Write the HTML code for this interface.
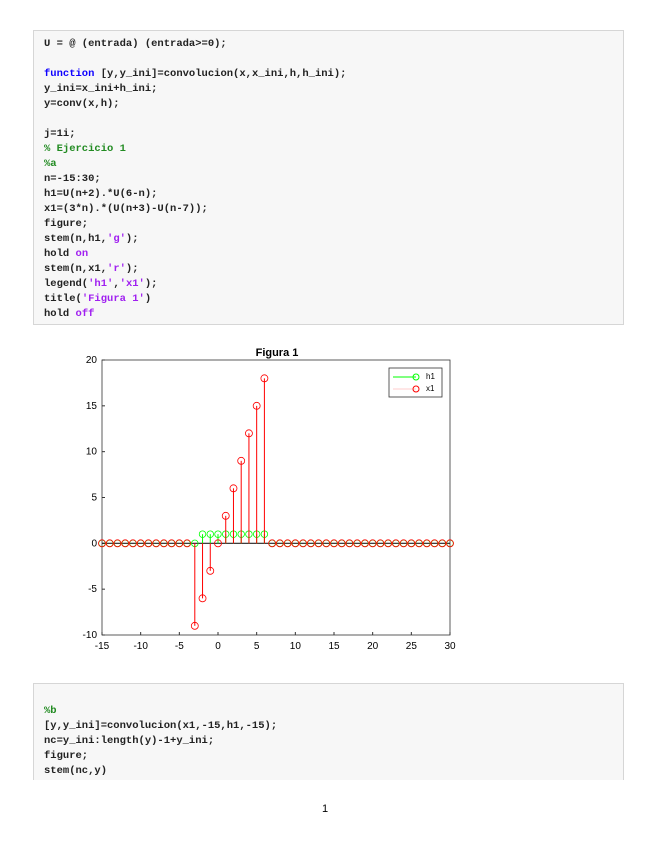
<!DOCTYPE html>
<html><head><meta charset="utf-8"><style>
body{margin:0;width:655px;height:848px;background:#fff;position:relative;font-family:"Liberation Sans",sans-serif}
.box{position:absolute;left:33px;width:591px;background:#f7f7f7;border:1px solid #d6d6d6;box-sizing:border-box}
pre{margin:0;position:absolute;left:10px;font-family:"Liberation Mono",monospace;font-size:10.5px;line-height:15px;font-weight:bold;color:#222}
.k{color:#0e00ff}.c{color:#228b22}.s{color:#a020f0}
#pn{position:absolute;left:322px;top:803px;font-size:11px}
</style></head><body>
<div class="box" style="top:30px;height:295px"><pre style="top:6px">U = @ (entrada) (entrada>=0);

<span class="k">function</span> [y,y_ini]=convolucion(x,x_ini,h,h_ini);
y_ini=x_ini+h_ini;
y=conv(x,h);

j=1i;
<span class="c">% Ejercicio 1</span>
<span class="c">%a</span>
n=-15:30;
h1=U(n+2).*U(6-n);
x1=(3*n).*(U(n+3)-U(n-7));
figure;
stem(n,h1,<span class="s">'g'</span>);
hold <span class="s">on</span>
stem(n,x1,<span class="s">'r'</span>);
legend(<span class="s">'h1'</span>,<span class="s">'x1'</span>);
title(<span class="s">'Figura 1'</span>)
hold <span class="s">off</span></pre></div>
<svg id="p" width="655" height="848" style="position:absolute;left:0;top:0" font-family="Liberation Sans" font-size="10"></svg>
<div class="box" style="top:683px;height:97px;border-bottom:none"><pre style="top:20px"><span class="c">%b</span>
[y,y_ini]=convolucion(x1,-15,h1,-15);
nc=y_ini:length(y)-1+y_ini;
figure;
stem(nc,y)</pre></div>
<div id="pn">1</div>
<script>
var s='',L=102,R=450,T=360,B=635;
function X(n){return L+(n+15)*(R-L)/45}
function Y(v){return T+(20-v)*(B-T)/30}
s+='<rect x="'+L+'" y="'+T+'" width="'+(R-L)+'" height="'+(B-T)+'" fill="#fff" stroke="#333" stroke-width="0.8"/>';
for(var v=-10;v<=20;v+=5){s+='<text x="'+(L-5)+'" y="'+(Y(v)+3)+'" text-anchor="end">'+v+'</text>';s+='<line x1="'+L+'" x2="'+(L+3)+'" y1="'+Y(v)+'" y2="'+Y(v)+'" stroke="#333"/>';}
for(var n=-15;n<=30;n+=5){s+='<text x="'+X(n)+'" y="'+(B+14)+'" text-anchor="middle">'+n+'</text>';s+='<line x1="'+X(n)+'" x2="'+X(n)+'" y1="'+B+'" y2="'+(B-3)+'" stroke="#333"/>';}
s+='<text x="277" y="356" text-anchor="middle" font-weight="bold" font-size="11">Figura 1</text>';
s+='<line x1="'+L+'" x2="'+R+'" y1="'+Y(0)+'" y2="'+Y(0)+'" stroke="#222" stroke-width="1.2"/>';
for(var n=-15;n<=30;n++){var h=(n>=-2&&n<=6)?1:0;var x=X(n);
 if(h){s+='<line x1="'+x+'" x2="'+x+'" y1="'+Y(0)+'" y2="'+Y(1)+'" stroke="#0f0"/>';}
 s+='<circle cx="'+x+'" cy="'+Y(h)+'" r="3.3" fill="none" stroke="#0f0" stroke-width="0.8"/>';}
for(var n=-15;n<=30;n++){var v=(n>=-3&&n<=6)?3*n:0;var x=X(n);
 if(v){s+='<line x1="'+x+'" x2="'+x+'" y1="'+Y(0)+'" y2="'+Y(v)+'" stroke="#f00"/>';}
 s+='<circle cx="'+x+'" cy="'+Y(v)+'" r="3.5" fill="none" stroke="#f00" stroke-width="0.8"/>';}
s+='<rect x="389" y="368" width="53" height="29" fill="#fff" stroke="#333" stroke-width="0.8"/>';
s+='<line x1="393" x2="416" y1="377" y2="377" stroke="#0f0"/><circle cx="416" cy="377" r="3" fill="none" stroke="#0f0"/><text x="426" y="379" font-size="8">h1</text>';
s+='<line x1="393" x2="416" y1="389" y2="389" stroke="#fcc"/><circle cx="416" cy="389" r="3" fill="none" stroke="#f00"/><text x="426" y="391" font-size="8">x1</text>';
document.getElementById('p').innerHTML=s;
</script>
</body></html>
